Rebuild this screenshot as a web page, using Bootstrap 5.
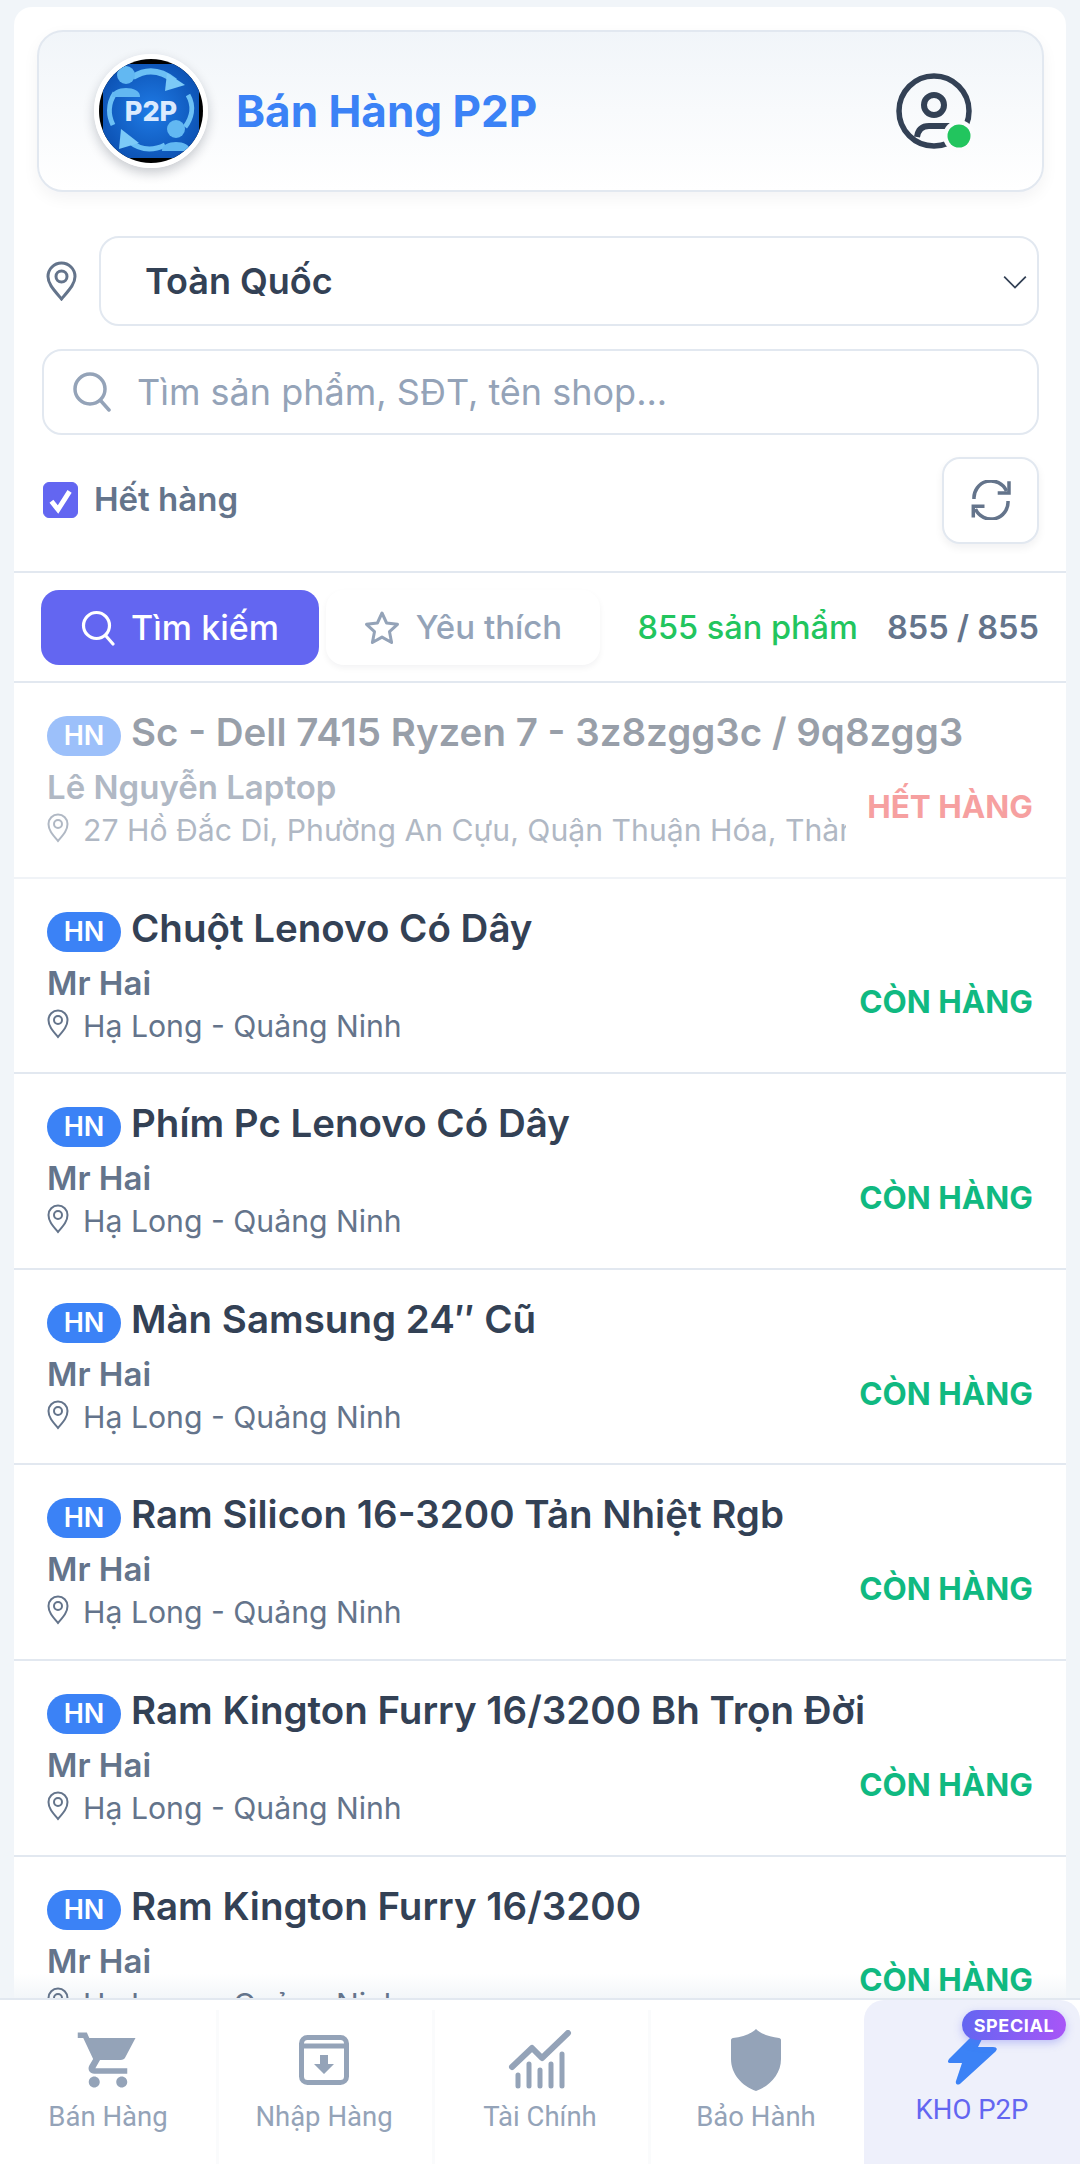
<!doctype html>
<html lang="vi">
<head>
  <meta charset="utf-8">
  <meta name="viewport" content="width=device-width, initial-scale=1">
  <title>Bán Hàng P2P</title>
  <link href="https://cdn.jsdelivr.net/npm/bootstrap@5.3.0/dist/css/bootstrap.min.css" rel="stylesheet">
  <style>
    html, body { height: 100%; }
    body {
      background-color: #f1f5f9;
      font-family: Inter, "Liberation Sans", sans-serif;
      height: 100vh;
      overflow: hidden;
    }
    .panel-main {
      margin: 7px 14px 0;
      background: linear-gradient(180deg, #fff calc(100% - 24px), #f3f6f9 100%);
      border-radius: 18px 18px 0 0;
      min-height: 0;
      overflow: hidden;
    }
    .head-card {
      margin: 23px 22px 0 23px;
      height: 162px;
      padding: 0 66px 0 55px;
      border: 2px solid #e2e8f0;
      border-radius: 26px;
      background: linear-gradient(180deg, #f1f5f9 0%, #fff 100%);
      box-shadow: 0 6px 16px rgba(15, 23, 42, .05);
    }
    .logo-round {
      width: 114px;
      height: 114px;
      border-radius: 50%;
      border: 5px solid #fff;
      box-shadow: 0 5px 12px rgba(15, 23, 42, .22);
      overflow: hidden;
      flex: none;
    }
    .head-title { color: #3b82f6; font-size: 44px; font-weight: 700; margin-left: 28px; }
    .head-profile { margin-left: auto; flex: none; }
    .filter-area { padding: 44px 27px 0 28px; }
    .pin-big { flex: none; margin-left: 4px; }
    .pick-select {
      height: 90px;
      margin-left: 22px;
      border: 2px solid #e2e8f0;
      border-radius: 20px;
      color: #334155;
      font-size: 36px;
      font-weight: 600;
      padding-left: 44px;
      background-size: 26px 26px;
      background-position: right 9px center;
      background-image: url("data:image/svg+xml,%3csvg xmlns='http://www.w3.org/2000/svg' viewBox='0 0 24 24'%3e%3cpath fill='none' stroke='%23334155' stroke-width='1.6' d='M2 8l10 10L22 8'/%3e%3c/svg%3e");
    }
    .search-box {
      height: 86px;
      margin-top: 23px;
      border: 2px solid #e2e8f0;
      border-radius: 20px;
      padding-left: 29px;
    }
    .search-box input {
      border: 0;
      box-shadow: none !important;
      font-size: 36px;
      padding: 0 0 0 26px;
      background: transparent;
    }
    .search-box input::placeholder { color: #94a3b8; opacity: 1; }
    .stock-check { margin-top: 22px; height: 86px; }
    .stock-check .form-check-input {
      width: 35px;
      height: 36px;
      margin: 0 0 0 1px;
      border-radius: 6px;
      background-color: #6366f1;
      border-color: #6366f1;
      flex: none;
    }
    .stock-check .form-check-input:checked[type=checkbox] {
      background-image: url("data:image/svg+xml,%3csvg xmlns='http://www.w3.org/2000/svg' viewBox='0 0 20 20'%3e%3cpath fill='none' stroke='%23fff' stroke-width='3' d='M4.500 10.500l4 5 7-11'/%3e%3c/svg%3e");
    }
    .stock-label { font-size: 33px; font-weight: 600; color: #64748b; margin-left: 16px; }
    .reload-btn {
      width: 97px;
      height: 87px;
      flex: none;
      border: 2px solid #e2e8f0;
      border-radius: 18px;
      background: #fff;
      box-shadow: 0 4px 8px rgba(15, 23, 42, .06);
      padding: 0;
    }
    .tab-row {
      margin-top: 28px;
      height: 112px;
      padding: 17px 27px 0 27px;
      border-top: 2px solid #e2e8f0;
      border-bottom: 2px solid #e2e8f0;
      align-items: flex-start;
    }
    .tab-btn {
      height: 75px;
      font-size: 33px;
      border-radius: 18px;
      border: 0;
      padding: 0;
    }
    .tab-on { width: 278px; background: #6366f1; color: #fff; font-weight: 500; font-size: 34px; }
    .tab-off { width: 274px; margin-left: 7px; background: #fff; color: #94a3b8; font-weight: 500; box-shadow: 0 3px 6px rgba(15, 23, 42, .05); }
    .count-green { color: #22c55e; font-size: 32.500px; font-weight: 500; line-height: 75px; }
    .count-grey { color: #64748b; font-size: 32.500px; font-weight: 600; line-height: 75px; margin-left: 29px; }
    .item-row {
      height: 195.6px;
      padding: 25px 33px 0;
      border-bottom: 2px solid #e2e8f0;
    }
    .item-off { opacity: .5; }
    .area-tag {
      background: #3b82f6;
      color: #fff;
      font-size: 27px;
      font-weight: 600;
      border-radius: 20px;
      width: 74px;
      height: 40px;
      flex: none;
      margin: 8px 10px 0 0;
    }
    .item-title { color: #334155; font-size: 38.500px; font-weight: 600; line-height: 48px; white-space: nowrap; }
    .seller-name { color: #64748b; font-size: 33px; font-weight: 600; line-height: 41px; margin-top: 11px; }
    .seller-addr { color: #64748b; font-size: 30.200px; line-height: 44px; white-space: nowrap; overflow: hidden; }
    .seller-addr svg { margin-right: 14px; vertical-align: -2px; }
    .state-in { color: #10b981; font-size: 31.500px; font-weight: 700; white-space: nowrap; margin-left: 12px; width: 175px; text-align: right; flex: none; margin-top: 5px; }
    .state-out { color: #ef4444; }
    .tab-bar {
      height: 166px;
      flex: none;
      background: #fff;
      border-top: 2px solid #e2e8f0;
      position: relative;
      font-family: Roboto, Inter, sans-serif;
    }
    .tab-cell {
      width: 216px;
      color: #94a3b8;
      font-size: 27.500px;
      position: relative;
      padding-top: 28px;
    }
    .tab-cell + .tab-cell::before {
      content: "";
      position: absolute;
      left: 0;
      top: 10px;
      bottom: 0;
      width: 3px;
      background: #fafbfc;
    }
    .tab-icon { height: 64px; display: flex; align-items: center; justify-content: center; }
    .tab-cap { line-height: 34px; margin-top: 8px; }
    .tab-special { background: #eef0fb; color: #6366f1; border-radius: 20px 20px 0 0; padding-top: 28px; }
    .tab-special::before { display: none; }
    .tab-special .tab-cap { margin-top: 1px; }
    .special-tag {
      position: absolute;
      top: 10px;
      right: 14px;
      height: 30px;
      width: 104px;
      border-radius: 15px;
      background: linear-gradient(90deg, #6366f1, #a855f7);
      color: #fff;
      font-family: Inter, sans-serif;
      font-size: 18px;
      font-weight: 700;
      letter-spacing: .6px;
      box-shadow: 0 3px 8px rgba(99, 102, 241, .35);
    }
  </style>
</head>
<body class="d-flex flex-column">

<div class="panel-main flex-grow-1">
  <div class="head-card d-flex align-items-center">
    <div class="logo-round">
      <svg width="104" height="104" viewBox="0 0 104 104" class="d-block">
        <defs>
          <radialGradient id="logoBlue" cx="50%" cy="50%" r="60%">
            <stop offset="0" stop-color="#1f7be6"/>
            <stop offset="1" stop-color="#0b4fb0"/>
          </radialGradient>
        </defs>
        <rect width="104" height="104" fill="#000"/>
        <rect x="4" y="5" width="96" height="94" rx="14" fill="url(#logoBlue)"/>
        <path d="M34 18C48 9 62 11 76 22" fill="none" stroke="#6cc0f5" stroke-width="6"/>
        <path d="M89 36C96 48 92 60 86 68" fill="none" stroke="#6cc0f5" stroke-width="5"/>
        <path d="M16 34C8 46 10 58 14 66M30 82C42 92 54 92 66 86" fill="none" stroke="#6cc0f5" stroke-width="5"/>
        <path d="M68 14L86 26L66 32Z" fill="#7ccaf7"/>
        <path d="M22 70L40 84L20 90Z" fill="#7ccaf7"/>
        <circle cx="27" cy="16" r="9" fill="#62b8f2"/>
        <path d="M13 38C12 26 42 26 41 38Z" fill="#62b8f2"/>
        <circle cx="77" cy="70" r="9" fill="#62b8f2"/>
        <path d="M63 92C62 80 92 80 91 92Z" fill="#62b8f2"/>
        <text x="52" y="62" text-anchor="middle" font-family="Inter, sans-serif" font-size="27" font-weight="800" fill="#dbeafe">P2P</text>
      </svg>
    </div>
    <div class="head-title">Bán Hàng P2P</div>
    <svg class="head-profile" width="84" height="84" viewBox="0 0 84 84">
      <circle cx="42" cy="42" r="35" fill="none" stroke="#334155" stroke-width="5.500"/>
      <circle cx="42" cy="36" r="10" fill="none" stroke="#334155" stroke-width="6"/>
      <path d="M58 57H37C30 57 26 61 25 68" fill="none" stroke="#334155" stroke-width="6"/>
      <circle cx="67" cy="67" r="16" fill="#fbfcfd"/>
      <circle cx="67" cy="67" r="11.500" fill="#22c55e"/>
    </svg>
  </div>

  <div class="filter-area">
    <div class="d-flex align-items-center">
      <svg class="pin-big" width="31" height="40" viewBox="0 0 31 40"><path d="M15.5 38C8 29 2 23 2 15.5a13.500 13.500 0 0 1 27 0C29 23 23 29 15.500 38Z" fill="none" stroke="#64748b" stroke-width="3"/><circle cx="15.500" cy="15.500" r="5.500" fill="none" stroke="#64748b" stroke-width="3"/></svg>
      <select class="form-select pick-select"><option>Toàn Quốc</option></select>
    </div>
    <div class="search-box d-flex align-items-center">
      <svg class="flex-shrink-0" width="38" height="40" viewBox="0 0 38 40"><circle cx="17" cy="17" r="15" fill="none" stroke="#94a3b8" stroke-width="3.500"/><path d="M28 29l8 9" stroke="#94a3b8" stroke-width="3.500" stroke-linecap="round"/></svg>
      <input class="form-control" type="text" placeholder="Tìm sản phẩm, SĐT, tên shop...">
    </div>
    <div class="stock-check d-flex align-items-center">
      <input class="form-check-input" type="checkbox" checked id="outStock">
      <label class="stock-label" for="outStock">Hết hàng</label>
      <button class="reload-btn ms-auto d-flex align-items-center justify-content-center" type="button">
        <svg width="40" height="40" viewBox="0 0 40 40"><path d="M3 19A17 17 0 0 1 35.500 11M37 21A17 17 0 0 1 4.500 29" fill="none" stroke="#64748b" stroke-width="3.500"/><path d="M38 1.300V13H26.700M2.300 37.500V26.300H13.500" fill="none" stroke="#64748b" stroke-width="3.500"/></svg>
      </button>
    </div>
  </div>

  <div class="tab-row d-flex">
    <button class="tab-btn tab-on d-flex align-items-center justify-content-center" type="button">
      <svg class="me-3" width="34" height="36" viewBox="0 0 34 36"><circle cx="15.500" cy="15.500" r="13" fill="none" stroke="#fff" stroke-width="3.200"/><path d="M25 26l7 8" stroke="#fff" stroke-width="3.200" stroke-linecap="round"/></svg>Tìm kiếm
    </button>
    <button class="tab-btn tab-off d-flex align-items-center justify-content-center" type="button">
      <svg class="me-3" width="36" height="36" viewBox="0 0 36 36"><path d="M18 3l4.600 10 10.900 1.300-8 7.400 2.100 10.800L18 27.100 8.400 32.500l2.100-10.800-8-7.400L13.400 13Z" fill="none" stroke="#94a3b8" stroke-width="3" stroke-linejoin="round"/></svg>Yêu thích
    </button>
    <div class="count-green ms-auto">855 sản phẩm</div>
    <div class="count-grey">855 / 855</div>
  </div>

  <div id="itemList"></div>
</div>

<div class="tab-bar d-flex">
  <div class="tab-cell text-center">
    <div class="tab-icon"><svg width="66" height="66" viewBox="0 0 24 24"><path fill="#94a3b8" d="M7 18c-1.100 0-2 .9-2 2s.9 2 2 2 2-.9 2-2-.9-2-2-2zM1 2v2h2l3.600 7.600-1.400 2.400c-.8 1.500.3 3 1.800 3h12v-2H7.400l1.700-3h7.500c.8 0 1.400-.4 1.700-1L22 4H5.200l-.9-2H1zm16 16c-1.100 0-2 .9-2 2s.9 2 2 2 2-.9 2-2-.9-2-2-2z"/></svg></div>
    <div class="tab-cap">Bán Hàng</div>
  </div>
  <div class="tab-cell text-center">
    <div class="tab-icon"><svg width="50" height="50" viewBox="0 0 50 50"><rect x="2.500" y="2.500" width="45" height="45" rx="6" fill="none" stroke="#94a3b8" stroke-width="5"/><path d="M3 11h44" stroke="#94a3b8" stroke-width="5"/><path d="M21 20h8v9h6L25 39 15 29h6Z" fill="#94a3b8"/></svg></div>
    <div class="tab-cap">Nhập Hàng</div>
  </div>
  <div class="tab-cell text-center">
    <div class="tab-icon"><svg width="64" height="60" viewBox="0 0 64 60"><path d="M4 37L24 18l10 10L60 3" fill="none" stroke="#94a3b8" stroke-width="6" stroke-linecap="round" stroke-linejoin="round"/><g stroke="#94a3b8" stroke-width="5" stroke-linecap="round"><path d="M10 45v11M21 34v22M32 40v16M43 34v22M54 24v32"/></g></svg></div>
    <div class="tab-cap">Tài Chính</div>
  </div>
  <div class="tab-cell text-center">
    <div class="tab-icon"><svg width="50" height="62" viewBox="0 0 50 62"><path d="M25 0c5 5 14 8 23 9 1 0 2 1 2 2v19c0 15-11 27-25 32C11 57 0 45 0 30V11c0-1 1-2 2-2 9-1 18-4 23-9Z" fill="#94a3b8"/></svg></div>
    <div class="tab-cap">Bảo Hành</div>
  </div>
  <div class="tab-cell tab-special text-center">
    <div class="special-tag d-flex align-items-center justify-content-center">SPECIAL</div>
    <div class="tab-icon"><svg width="52" height="50" viewBox="0 0 52 50"><path d="M27 0L3 24c-2 3-1 4 2 4h11L10 46c-1 3 2 5 5 2L49 17c3-3 2-5-2-5H32l6-12Z" fill="#3b82f6"/></svg></div>
    <div class="tab-cap">KHO P2P</div>
  </div>
</div>

<script>
  var items = [
    { title: "Sc - Dell 7415 Ryzen 7 - 3z8zgg3c / 9q8zgg3", seller: "Lê Nguyễn Laptop", addr: "27 Hồ Đắc Di, Phường An Cựu, Quận Thuận Hóa, Thành Phố Huế", out: true },
    { title: "Chuột Lenovo Có Dây" },
    { title: "Phím Pc Lenovo Có Dây" },
    { title: "Màn Samsung 24″ Cũ" },
    { title: "Ram Silicon 16-3200 Tản Nhiệt Rgb" },
    { title: "Ram Kington Furry 16/3200 Bh Trọn Đời" },
    { title: "Ram Kington Furry 16/3200" }
  ];
  var pin = '<svg width="22" height="30" viewBox="0 0 22 30"><path d="M11 28C5 21 1.500 17 1.500 11a9.500 9.500 0 0 1 19 0C20.500 17 17 21 11 28Z" fill="none" stroke="#64748b" stroke-width="2"/><circle cx="11" cy="11" r="4" fill="none" stroke="#64748b" stroke-width="2"/></svg>';
  document.getElementById("itemList").innerHTML = items.map(function (it) {
    return '<div class="item-row' + (it.out ? ' item-off' : '') + '">' +
      '<div class="d-flex align-items-center item-title"><span class="area-tag d-flex align-items-center justify-content-center">HN</span>' + it.title + '</div>' +
      '<div class="d-flex align-items-center"><div class="flex-grow-1" style="min-width:0">' +
      '<div class="seller-name">' + (it.seller || "Mr Hai") + '</div>' +
      '<div class="seller-addr">' + pin + (it.addr || "Hạ Long - Quảng Ninh") + '</div></div>' +
      '<div class="state-in' + (it.out ? ' state-out' : '') + '">' + (it.out ? "HẾT HÀNG" : "CÒN HÀNG") + '</div></div></div>';
  }).join("");
</script>

<script src="https://cdn.jsdelivr.net/npm/bootstrap@5.3.0/dist/js/bootstrap.bundle.min.js"></script>
</body>
</html>
